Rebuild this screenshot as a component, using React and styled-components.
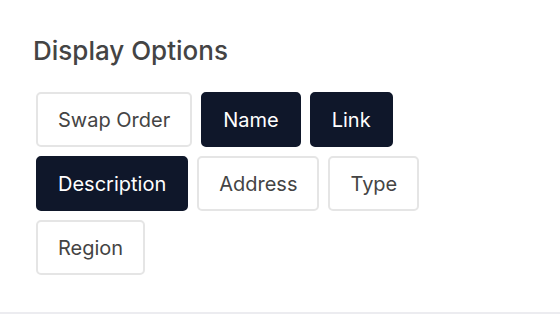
import { createGlobalStyle, styled } from 'styled-components'

const GlobalStyle = createGlobalStyle`
    body{
        margin: 0;
        background-color: #fff;
        font-family: Inter, "Noto Sans", sans-serif;
    }
`

const Panel = styled.section`
    width: 560px;
    height: 314px;
    box-sizing: border-box;
    padding: 35px 32px 0 33px;
    border-bottom: 2px solid #ececf0;
`

const Title = styled.h2`
    margin: 0 0 25px;
    font-size: 26px;
    font-weight: 500;
    line-height: 32px;
    color: #444;
`

const Options = styled.div`
    display: flex;
    flex-wrap: wrap;
    gap: 9px;
    margin-left: 3px;
    width: 400px;
`

const Option = styled.button`
    height: 55px;
    box-sizing: border-box;
    padding: 0 20px;
    border-radius: 5px;
    border: 2px solid ${p => p.$active ? '#0f172a' : '#e5e5e5'};
    background-color: ${p => p.$active ? '#0f172a' : '#fff'};
    color: ${p => p.$active ? '#fff' : '#444'};
    font-family: inherit;
    font-size: 20px;
    font-weight: 400;
    cursor: pointer;
`

const options = [
    { text: 'Swap Order', active: false },
    { text: 'Name', active: true },
    { text: 'Link', active: true },
    { text: 'Description', active: true },
    { text: 'Address', active: false },
    { text: 'Type', active: false },
    { text: 'Region', active: false },
]

export default function App(){
    return(
        <Panel>
            <GlobalStyle/>
            <Title>Display Options</Title>
            <Options>
                {options.map(o => (
                    <Option key={o.text} $active={o.active}>{o.text}</Option>
                ))}
            </Options>
        </Panel>
    )
}
